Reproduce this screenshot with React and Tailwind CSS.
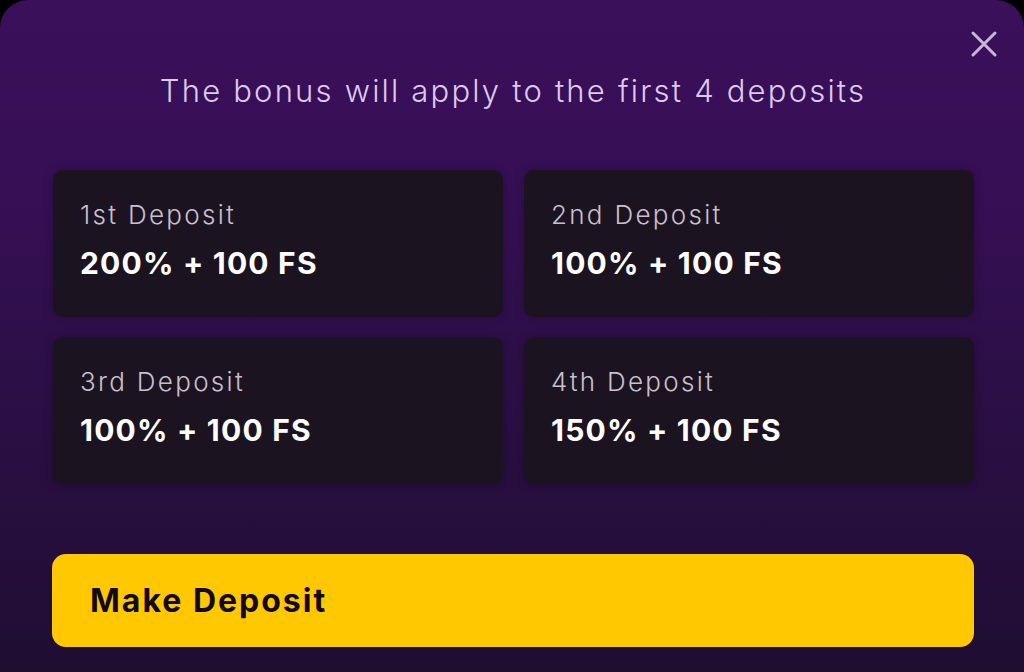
import React from "react";

const deposits = [
  { label: "1st Deposit", value: "200% + 100 FS" },
  { label: "2nd Deposit", value: "100% + 100 FS" },
  { label: "3rd Deposit", value: "100% + 100 FS" },
  { label: "4th Deposit", value: "150% + 100 FS" },
];

export default function App() {
  return (
    <div className="w-[1024px] h-[672px] bg-black overflow-hidden" style={{ fontFamily: "Inter, 'Open Sans', sans-serif" }}>
      <div className="relative w-full h-full rounded-t-[28px] bg-[linear-gradient(180deg,#3b0f5b_0%,#360f55_30%,#2b0f45_60%,#1f0d32_100%)] flex flex-col pl-[52px] pr-[50px]">
        <button className="absolute right-[26px] top-[30px] w-[28px] h-[28px] flex items-center justify-center">
          <svg width="28" height="28" viewBox="0 0 28 28" fill="none" stroke="#c9b7d8" strokeWidth="3" strokeLinecap="round">
            <path d="M3 3 L25 25 M25 3 L3 25" />
          </svg>
        </button>
        <h1 className="mt-[72px] text-center text-[31px] leading-[38px] font-light text-[#dccbea] tracking-[2.2px]">
          The bonus will apply to the first 4 deposits
        </h1>
        <div className="mt-[60px] grid grid-cols-2 gap-x-[21px] gap-y-[20px] pl-[1px]">
          {deposits.map((d) => (
            <div key={d.label} className="h-[147px] rounded-[10px] bg-[#1c1320] shadow-[0_0_10px_rgba(0,0,0,0.25)] px-[27px] pt-[27px]">
              <div className="text-[26px] leading-[36px] font-light text-[#c9c0cd] tracking-[2.3px]">{d.label}</div>
              <div className="mt-[12px] text-[30px] leading-[36px] font-bold text-white tracking-[1.2px]">{d.value}</div>
            </div>
          ))}
        </div>
        <button className="mt-[70px] h-[93px] w-full rounded-[14px] bg-[#ffc800] flex items-center pl-[38px]">
          <span className="text-[32px] font-bold text-[#120a10] tracking-[2px]">Make Deposit</span>
        </button>
      </div>
    </div>
  );
}
